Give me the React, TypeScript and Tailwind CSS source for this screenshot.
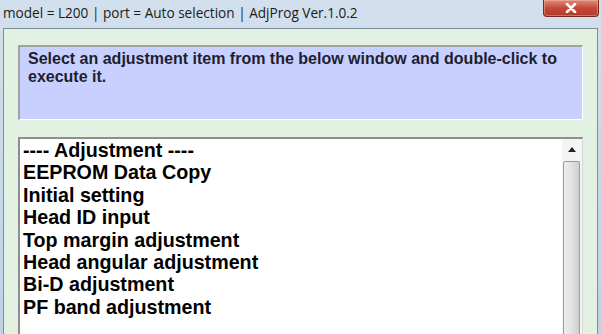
import React from "react";

const items = [
  "---- Adjustment ----",
  "EEPROM Data Copy",
  "Initial setting",
  "Head ID input",
  "Top margin adjustment",
  "Head angular adjustment",
  "Bi-D adjustment",
  "PF band adjustment",
];

export default function App() {
  return (
    <div className="relative w-[601px] h-[334px] overflow-hidden flex flex-col bg-gradient-to-b from-[#d2e0ee] to-[#bfd2e6]">
      {/* title bar */}
      <div className="h-[28px] shrink-0 flex items-start pl-[3px] pt-[3px]">
        <span
          className="text-[13.6px] leading-[20px] text-[#1b1b1b] whitespace-nowrap"
          style={{ fontFamily: '"Open Sans", "Noto Sans", sans-serif' }}
        >
          model = L200 | port = Auto selection | AdjProg Ver.1.0.2
        </span>
      </div>
      {/* close button */}
      <div className="absolute left-[543px] top-0 w-[56px] h-[17px] rounded-b-[4px] border border-t-0 border-[#7a2a22] bg-gradient-to-b from-[#dd8c7c] via-[#c4483a] to-[#b23a2a] flex items-center justify-center shadow-[inset_0_0_0_1px_rgba(255,200,190,0.4)]">
        <svg width="12" height="10" viewBox="0 0 12 10">
          <path d="M2 1 L10 9 M10 1 L2 9" stroke="#ffffff" strokeWidth="2.6" strokeLinecap="round" />
        </svg>
      </div>
      {/* client area */}
      <div className="flex-1 ml-[3px] mr-[3px] border-l border-t border-r border-[#7d8d9c] bg-[#e3f1e3] pt-[16px] px-[14px] flex flex-col min-h-0">
        <div
          className="h-[75px] shrink-0 bg-[#c8d0ff] border-t-2 border-l-2 border-[#a0a0a0] border-b border-r border-b-white border-r-white pl-[8px] pt-[3px] pr-[8px] text-[16px] leading-[18px] font-bold text-[#1e1e2e]"
          style={{ fontFamily: '"Liberation Sans", Arial, sans-serif' }}
        >
          Select an adjustment item from the below window and double-click to execute it.
        </div>
        <div className="mt-[17px] flex-1 min-h-0 flex bg-white border-t-2 border-l-2 border-[#8e8e8e] border-r border-r-[#d8d8d8]">
          <div
            className="flex-1 pl-[3px] pt-0 text-[19.7px] leading-[22.4px] font-bold text-black"
            style={{ fontFamily: '"Liberation Sans", Arial, sans-serif' }}
          >
            {items.map((t) => (
              <div key={t} className="whitespace-nowrap">
                {t}
              </div>
            ))}
          </div>
          <div className="w-[20px] shrink-0 flex flex-col bg-[#f4f4f4] pl-[1px] pr-[2px]">
            <div className="h-[21px] flex items-center justify-center">
              <svg width="8" height="5" viewBox="0 0 8 5">
                <path d="M0 5 L4 0 L8 5 Z" fill="#222" />
              </svg>
            </div>
            <div className="flex-1 mt-[1px] rounded-t-[2px] border border-[#9c9c9c] border-b-0 bg-gradient-to-r from-[#ececec] via-[#e2e2e2] to-[#cfcfcf]" />
          </div>
        </div>
      </div>
    </div>
  );
}
